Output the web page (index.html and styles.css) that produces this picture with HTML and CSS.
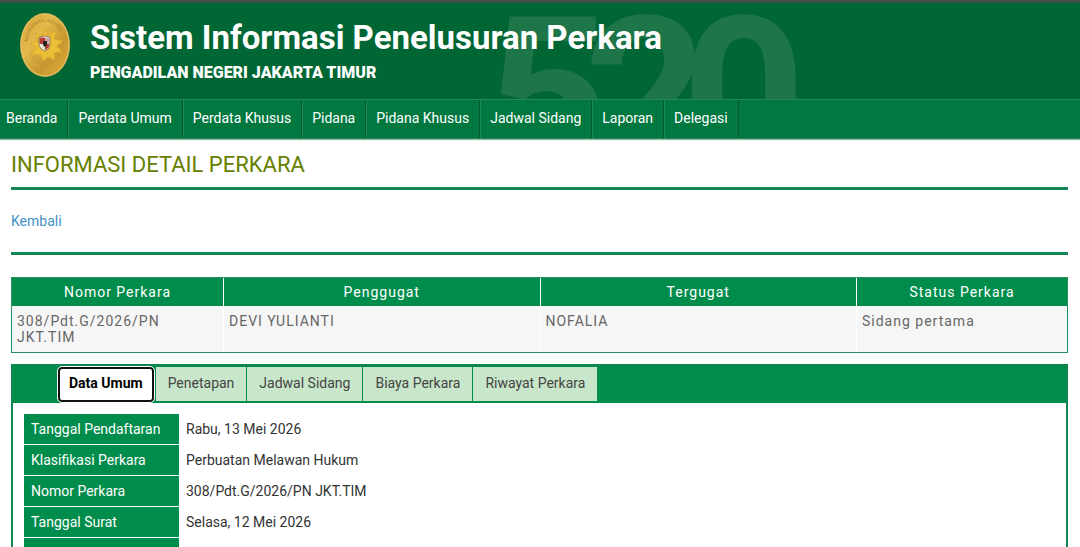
FILE: index.html
```html
<!DOCTYPE html>
<html lang="id">
<head>
    <meta charset="UTF-8">
    <meta name="viewport" content="width=device-width, initial-scale=1.0">
    <title>Sistem Informasi Penelusuran Perkara</title>
    <link rel="stylesheet" href="styles.css">
</head>
<body>
    <header class="header">
        <svg class="logo" viewBox="0 0 50 64" aria-hidden="true">
            <defs>
                <linearGradient id="gold" x1="0" y1="0" x2="1" y2="1">
                    <stop offset="0" stop-color="#d2a238"/>
                    <stop offset=".35" stop-color="#e3ba4c"/>
                    <stop offset=".65" stop-color="#c99730"/>
                    <stop offset="1" stop-color="#dcae3c"/>
                </linearGradient>
                <path id="arc" d="M8 29C9 16 16 9 25 9s16 7 18 20"/>
            </defs>
            <ellipse cx="25" cy="32" rx="25" ry="32" fill="#c5a04b"/>
            <ellipse cx="25" cy="32" rx="24" ry="31" fill="url(#gold)" stroke="#e5c56a"/>
            <text class="logo-text"><textPath href="#arc">MAHKAMAH AGUNG</textPath></text>
            <path d="M12 46Q25 57 38 46M10 42Q25 54 40 42" fill="none" stroke="#c39334" stroke-width=".8"/>
            <path d="M25 15l3 7 8-4-2 8 9 2-6 5 5 6-8 1 1 7-7-3-5 4-2-6-9-1 4-6-6-5 8-2-3-8 8 2z" fill="#ebbe35" stroke="#d8a831" stroke-width=".7"/>
            <path d="M19 24q6-2 11 0v8q-1 5-5 6q-5-1-6-6z" fill="#fff" stroke="#765b32" stroke-width=".8"/>
            <path d="M19.500 24.500H25V31h-5.500z" fill="#b93e35"/>
            <path d="M25 24.500h4.500V31H25z" fill="#c9a5a0"/>
            <path d="M20 31h5v6q-4-1-5-6z" fill="#e5e2cf"/>
            <path d="M25 31h4.500q0 4-4.500 6z" fill="#ae4438"/>
            <path d="M23 28h4v4l-2 2-2-2z" fill="#252725"/>
        </svg>
        <div class="brand">
            <h1>Sistem Informasi Penelusuran Perkara</h1>
            <h2>PENGADILAN NEGERI JAKARTA TIMUR</h2>
        </div>
        <div class="counter">520</div>
    </header>

    <nav class="nav">
        <a href="#">Beranda</a>
        <a href="#">Perdata Umum</a>
        <a href="#">Perdata Khusus</a>
        <a href="#">Pidana</a>
        <a href="#">Pidana Khusus</a>
        <a href="#">Jadwal Sidang</a>
        <a href="#">Laporan</a>
        <a href="#">Delegasi</a>
    </nav>

    <main class="content">
        <h3 class="title">INFORMASI DETAIL PERKARA</h3>
        <div class="back"><a href="#">Kembali</a></div>

        <table class="case">
            <thead>
                <tr>
                    <th class="narrow">Nomor Perkara</th>
                    <th>Penggugat</th>
                    <th>Tergugat</th>
                    <th class="narrow">Status Perkara</th>
                </tr>
            </thead>
            <tbody>
                <tr>
                    <td>308/Pdt.G/2026/PN JKT.TIM</td>
                    <td>DEVI YULIANTI</td>
                    <td>NOFALIA</td>
                    <td>Sidang pertama</td>
                </tr>
            </tbody>
        </table>

        <section class="detail">
            <div class="tabs" role="tablist">
                <button class="tab active" role="tab" aria-selected="true">Data Umum</button>
                <button class="tab" role="tab">Penetapan</button>
                <button class="tab" role="tab">Jadwal Sidang</button>
                <button class="tab" role="tab">Biaya Perkara</button>
                <button class="tab" role="tab">Riwayat Perkara</button>
            </div>
            <table class="info">
                <tr><th>Tanggal Pendaftaran</th><td>Rabu, 13 Mei 2026</td></tr>
                <tr><th>Klasifikasi Perkara</th><td>Perbuatan Melawan Hukum</td></tr>
                <tr><th>Nomor Perkara</th><td>308/Pdt.G/2026/PN JKT.TIM</td></tr>
                <tr><th>Tanggal Surat</th><td>Selasa, 12 Mei 2026</td></tr>
                <tr><th></th><td></td></tr>
            </table>
        </section>
    </main>
</body>
</html>
```
FILE: styles.css
```css
*{
    margin: 0;
    padding: 0;
    box-sizing: border-box;
}
html{
    overflow: hidden;
}
body{
    font: 14px/18px Roboto, sans-serif;
    color: #333;
    background-color: #fff;
}
.header{
    position: relative;
    display: flex;
    align-items: flex-start;
    gap: 20px;
    height: 99px;
    padding: 10px 20px 0;
    border-top: 3px solid #40514a;
    background-color: #006633;
    color: #fff;
    overflow: hidden;
}
.logo{
    width: 50px;
    height: 64px;
}
.logo-text{
    font: 5px "Liberation Sans", sans-serif;
    fill: #ad8130;
}
.brand{
    position: relative;
    z-index: 1;
    padding-top: 5px;
}
.brand h1{
    font-size: 33px;
    line-height: 40px;
}
.brand h2{
    margin-top: 5px;
    font-size: 16px;
    font-weight: 900;
    line-height: 20px;
}
/* big case counter behind the heading */
.counter{
    position: absolute;
    top: -14px;
    left: 486px;
    font-size: 216px;
    font-weight: bold;
    line-height: 216px;
    letter-spacing: -26px;
    color: #1d7548;
}
.nav{
    display: flex;
    height: 40px;
    border-top: 1px solid #238a57;
    border-bottom: 1px solid #2c7d56;
    background-color: #007840;
    box-shadow: 0 1px 1px #8ac5a8;
}
.nav a{
    padding: 9px 10px 0 9px;
    border-left: 1px solid #1b8b55;
    border-right: 1px solid #005a28;
    color: #fff;
    text-decoration: none;
}
.nav a:first-child{
    padding-left: 5px;
    border-left-color: #007840;
}
.content{
    padding: 0 12px 0 11px;
}
.title{
    padding: 12px 0 9px;
    border-bottom: 3px solid #118653;
    font-size: 22px;
    font-weight: normal;
    line-height: 27px;
    color: #668000;
}
.back{
    padding: 22px 0;
    margin-bottom: 22px;
    border-bottom: 3px solid #118653;
}
.back a{
    color: #3f92c3;
    text-decoration: none;
}
table{
    width: 100%;
    border-collapse: separate;
    border-spacing: 0;
}
.case{
    table-layout: fixed;
    border: 1px solid #2a9262;
    letter-spacing: 1px;
    line-height: 16px;
}
.case th{
    padding: 6px;
    background-color: #008d4c;
    color: #fff;
    font-weight: normal;
}
.case .narrow{
    width: 20%;
}
.case td{
    padding: 7px 5px;
    background-color: #f6f6f6;
    color: #666;
    vertical-align: top;
}
.case th + th,
.case td + td{
    border-left: 1px solid #fff;
}
.detail{
    margin-top: 11px;
    border: 2px solid #118653;
}
.tabs{
    display: flex;
    align-items: flex-start;
    gap: 1px;
    padding: 1px 0 2px 44px;
    background-color: #008d4c;
}
.tab{
    height: 34px;
    padding: 0 12px 2px;
    border: none;
    background-color: #c8e6c9;
    color: #444;
    font: 14px/18px Roboto, sans-serif;
}
.tab.active{
    height: 35px;
    margin: 0 1px -1px;
    padding: 0 9px 3px;
    border: 2px solid #111;
    border-radius: 4px;
    outline: 1px solid #fff;
    background-color: #fff;
    color: #000;
    font-weight: bold;
}
.info{
    padding: 11px;
}
.info th,
.info td{
    height: 31px;
    padding: 0 7px;
    border-bottom: 1px solid #fff;
    text-align: left;
}
.info th{
    width: 155px;
    background-color: #008d4c;
    color: #fff;
    font-weight: normal;
    white-space: nowrap;
}
```
